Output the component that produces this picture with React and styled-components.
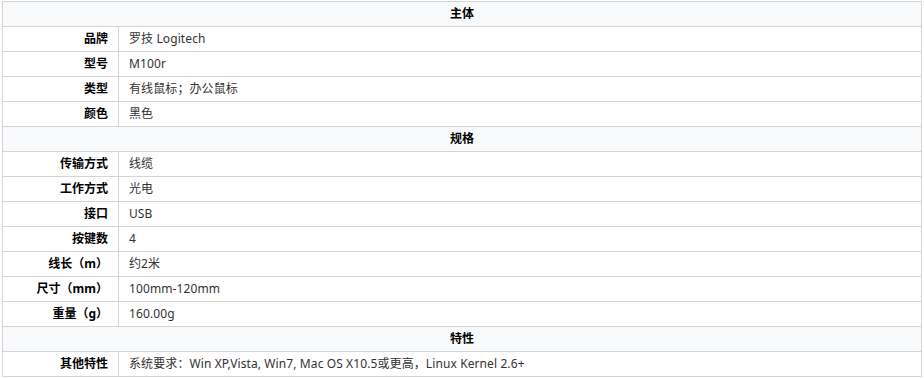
import React from "react";
import styled, { createGlobalStyle } from "styled-components";

const GlobalStyle = createGlobalStyle`
  body {
    margin: 0;
    background: #fff;
    font-family: "Noto Sans", "Noto Sans CJK SC", sans-serif;
  }
`;

const Wrap = styled.div`
  padding: 1px 0 0 2px;
`;

const Table = styled.table`
  width: 920px;
  border-collapse: collapse;
  font-size: 12px;
  color: #333;
`;

const Row = styled.tr`
  height: 25px;
`;

const Section = styled.th`
  background: #f8f9fa;
  border: 1px solid #d4d4d4;
  color: #000;
  font-weight: bold;
  text-align: center;
  padding: 0 0 1px;
  line-height: 23px;
`;

const Label = styled.th`
  width: 105px;
  border: 1px solid #d4d4d4;
  color: #000;
  font-weight: bold;
  text-align: right;
  padding: 0 10px 1px 0;
  line-height: 23px;
  white-space: nowrap;
`;

const Value = styled.td`
  border: 1px solid #d4d4d4;
  padding: 0 0 1px 10px;
  line-height: 23px;
  text-align: left;
  letter-spacing: 0.1px;
`;

const groups = [
  {
    title: "主体",
    rows: [
      ["品牌", "罗技 Logitech"],
      ["型号", "M100r"],
      ["类型", "有线鼠标；办公鼠标"],
      ["颜色", "黑色"],
    ],
  },
  {
    title: "规格",
    rows: [
      ["传输方式", "线缆"],
      ["工作方式", "光电"],
      ["接口", "USB"],
      ["按键数", "4"],
      ["线长（m）", "约2米"],
      ["尺寸（mm）", "100mm-120mm"],
      ["重量（g）", "160.00g"],
    ],
  },
  {
    title: "特性",
    rows: [
      ["其他特性", "系统要求：Win XP,Vista, Win7, Mac OS X10.5或更高，Linux Kernel 2.6+"],
    ],
  },
];

const App = () => (
  <Wrap>
    <GlobalStyle />
    <Table>
      <tbody>
        {groups.map((g) => (
          <React.Fragment key={g.title}>
            <Row>
              <Section colSpan={2}>{g.title}</Section>
            </Row>
            {g.rows.map(([k, v]) => (
              <Row key={k}>
                <Label>{k}</Label>
                <Value>{v}</Value>
              </Row>
            ))}
          </React.Fragment>
        ))}
      </tbody>
    </Table>
  </Wrap>
);

export default App;
